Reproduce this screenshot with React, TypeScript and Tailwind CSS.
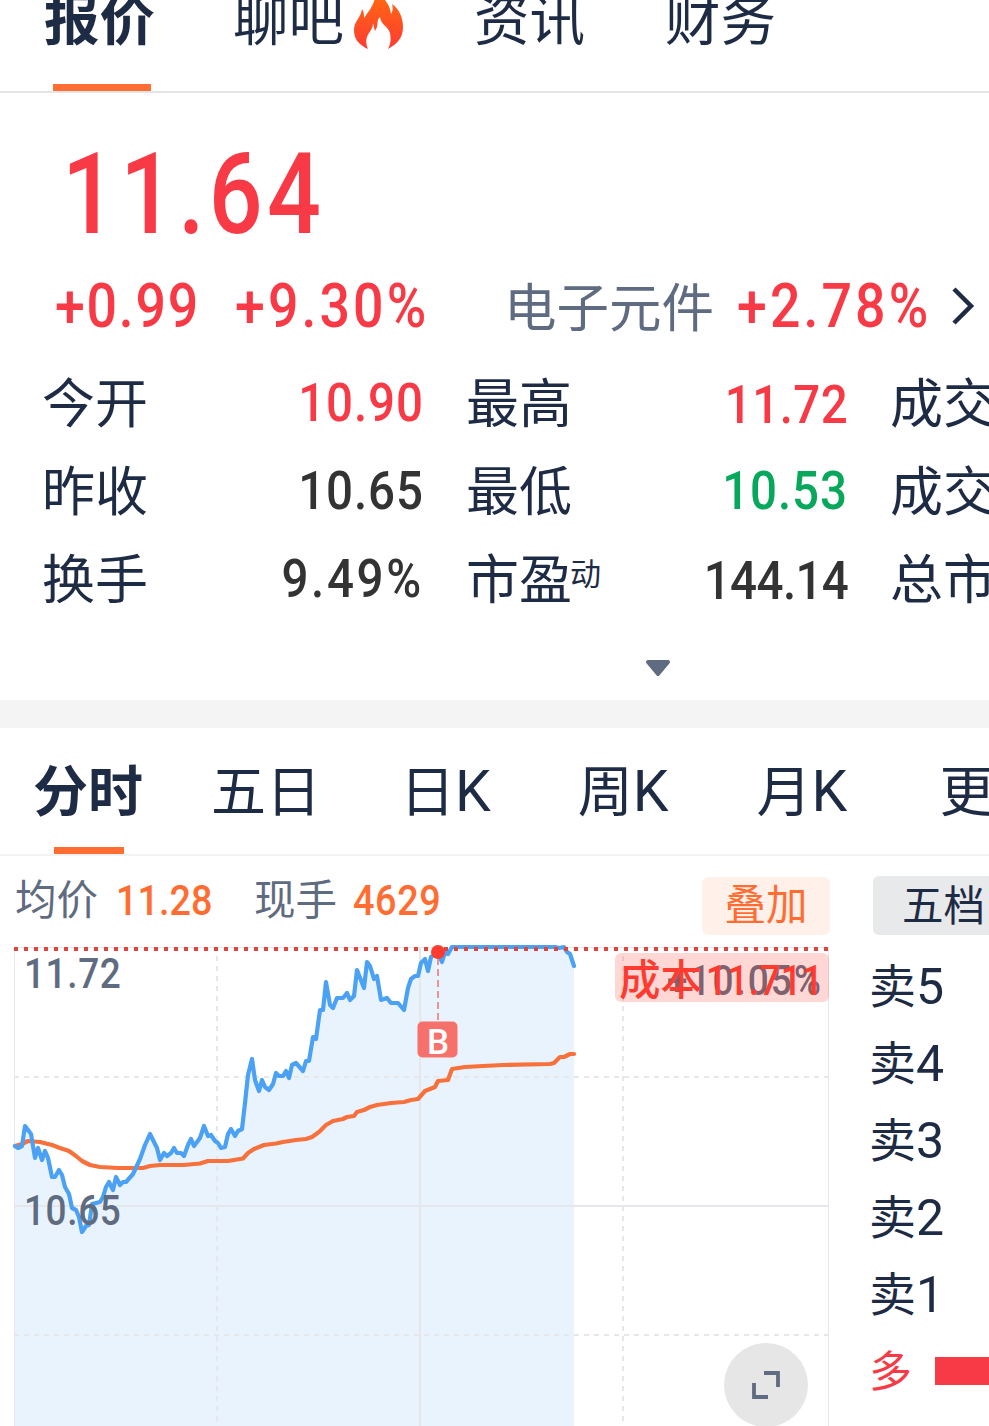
import React from "react";
import clsx from "clsx";

const CJK = "font-['Noto_Sans_CJK_SC',sans-serif]";
const NUM = "font-['Roboto','Noto_Sans_CJK_SC',sans-serif] font-medium";

// condensed figures, squeezed horizontally and tracked back out
const FIGURE = clsx(NUM, "origin-left scale-x-88 whitespace-nowrap");

// price line, chart coordinates start at the top-left of the plot panel
const pricePoints =
  "15,206 18,208 22,206 25,186 31,194 35,218 38,208 42,220 45,211 48,218 52,237 55,237 59,230 62,235 65,247 69,254 72,268 76,270 79,277 82,292 86,286 89,285 92,264 100,262 103,257 106,247 109,242 113,250 116,237 120,245 123,242 126,242 133,234 140,219 145,205 150,194 157,208 160,220 164,213 167,216 171,213 174,208 177,213 181,213 184,216 188,205 191,199 194,206 200,198 204,186 208,196 211,195 215,201 218,203 221,208 225,207 228,194 231,189 235,196 238,191 242,189 245,163 248,135 252,119 255,140 259,151 262,140 265,147 269,150 273,144 276,133 279,136 283,136 286,131 289,138 292,125 296,123 303,131 306,121 309,121 313,97 316,99 320,70 323,70 326,42 330,65 333,68 337,58 343,58 347,53 350,60 354,56 357,30 364,48 367,22 370,26 374,39 377,36 381,60 387,58 391,63 398,63 404,70 408,48 411,39 415,36 418,36 421,23 425,19 428,31 431,17 438,12 442,22 445,12 448,14 452,7 555,7 559,8 564,7 567,12 570,14 574,26";

const averagePoints =
  "15,206 22,204 28,201 40,202 52,205 60,208 69,211 76,216 82,221 90,225 100,227 118,228 143,228 150,226 160,225 184,225 200,223.5 208,221 228,221 243,218.5 248,213 254,209 264,205 276,203.5 283,202 296,200 306,199 312,197 319,192 326,185 333,181 343,179 347,177 354,176 357,172 364,170 370,167 377,165 391,163 404,162 411,160 418,159 425,151 435,147 438,141 448,140 452,129 465,127 483,126 503,125 550,124 554,123 560,117 564,117 570,114 574,114";

interface Stat {
  label: string;
  sup?: string;
  value?: string;
  tone?: string;
}

const stats: Stat[] = [
  { label: "今开", value: "10.90", tone: "text-[#f83a46] tracking-[1px]" },
  { label: "最高", value: "11.72", tone: "text-[#f83a46] tracking-[0.5px] pt-1" },
  { label: "成交量" },
  { label: "昨收", value: "10.65", tone: "text-[#333333] tracking-[1px]" },
  { label: "最低", value: "10.53", tone: "text-[#07a85c] tracking-[1px]" },
  { label: "成交额" },
  { label: "换手", value: "9.49%", tone: "text-[#333333] tracking-[3px]" },
  { label: "市盈", sup: "动", value: "144.14", tone: "text-[#333333] tracking-[-0.7px] pt-1" },
  { label: "总市值" },
];

const periods = [
  { text: "五日", margin: "ml-[68px]" },
  { text: "日", latin: "K", margin: "ml-[79px]" },
  { text: "周", latin: "K", margin: "ml-[87px]" },
  { text: "月", latin: "K", margin: "ml-[88px]" },
  { text: "更多", margin: "ml-[92px]" },
];

const sellLevels = ["5", "4", "3", "2", "1"];

const Flame = () => (
  <svg className="mt-[5px] ml-[9px] h-[56px] w-[52px] shrink-0" viewBox="353 -7 52 56">
    <defs>
      <linearGradient id="flame" x1="0" y1="0" x2="0" y2="1">
        <stop offset="0" stopColor="#ff6a10" />
        <stop offset="1" stopColor="#ff3a34" />
      </linearGradient>
    </defs>
    <path
      fill="url(#flame)"
      d="M368 49C359 45 354 39 354 30C354 21 361 18 362 9C364 12 364 14 364 18C369 11 374 5 376 -6C383 -4 390 4 391 14C393 11 393 8 392 4C399 9 403 17 403 27C403 38 397 44 388 49C391 43 391 38 390 33C388 26 381 25 380 17C376 20 379 26 375 31C374 29 374 26 373 23C373 28 371 30 369 33C365 39 366 44 368 49Z"
    />
  </svg>
);

const TopTabs = () => (
  <nav className={clsx(CJK, "h-[93px] overflow-hidden border-b-2 border-[#e5e5e5] text-[55.5px] leading-[56px] whitespace-nowrap text-[#1e2b45]")}>
    <div className="-mt-[12px] flex pl-[44px]">
      <div className="flex flex-col items-center">
        <span className="font-bold">报价</span>
        <span className="mt-[40px] ml-[5px] h-[7px] w-[98px] bg-[#ff6d33]" />
      </div>
      <span className="ml-[78px]">聊吧</span>
      <Flame />
      <span className="ml-[69px]">资讯</span>
      <span className="ml-[80px]">财务</span>
    </div>
  </nav>
);

const StatCell = ({ label, sup, value, tone }: Stat) => (
  <div className="flex h-[88px] items-center justify-between whitespace-nowrap">
    <span className="flex pb-[7px] text-[53px] leading-[60px] text-[#1e2b45]">
      {label}
      {sup && <sup className="top-0 -ml-[2px] text-[31px] leading-[52px]">{sup}</sup>}
    </span>
    {value && (
      <span className={clsx(NUM, "origin-right scale-x-88 text-[54px] leading-[60px]", tone)}>{value}</span>
    )}
  </div>
);

const Quote = () => (
  <section className={clsx(CJK, "h-[607px] overflow-hidden pt-[46px]")}>
    <div className={clsx(NUM, "ml-[62px] w-[400px] origin-left scale-x-84 text-[113px] leading-[112px] tracking-[5px] text-[#f83a46]")}>
      11.64
    </div>
    <div className="mt-[25px] flex h-[60px] items-center leading-[60px]">
      <span className={clsx(FIGURE, "ml-[55px] w-[180px] text-[61px] tracking-[2px] text-[#f83a46]")}>+0.99</span>
      <span className={clsx(FIGURE, "w-[269px] text-[61px] tracking-[3.5px] text-[#f83a46]")}>+9.30%</span>
      <span className="-mt-[4px] w-[231px] text-[52.5px] text-[#5f6b80]">电子元件</span>
      <span className={clsx(FIGURE, "ml-[2px] w-[213px] text-[61px] tracking-[3.5px] text-[#f83a46]")}>+2.78%</span>
      <svg className="h-[40px] w-[26px] shrink-0" viewBox="0 0 26 40" fill="none" stroke="#1e2b45" strokeWidth="4.5">
        <path d="M4 3L21 20L4 37" />
      </svg>
    </div>
    <div className="mt-[23px] grid grid-cols-[382px_382px_382px] gap-x-[42px] pl-[42px]">
      {stats.map((stat) => (
        <StatCell key={stat.label} {...stat} />
      ))}
    </div>
    <svg className="mt-[36px] ml-[645px] h-[18px] w-[26px]" viewBox="0 0 26 18">
      <path d="M3 3H23L13 15Z" fill="#5f6b80" stroke="#5f6b80" strokeWidth="4" strokeLinejoin="round" />
    </svg>
  </section>
);

const PeriodTabs = () => (
  <nav className={clsx(CJK, "flex h-[128px] overflow-hidden border-b-2 border-[#f3f3f3] pt-[27px] pl-[33px] text-[55px] leading-[64px] whitespace-nowrap text-[#1e2b45]")}>
    <div className="flex flex-col items-center">
      <span className="font-bold">分时</span>
      <span className="mt-[28px] ml-[2px] h-[7px] w-[70px] bg-[#ff6d33]" />
    </div>
    {periods.map(({ text, latin, margin }) => (
      <span key={text} className={margin}>
        {text}
        {latin && <span className="font-['Roboto'] text-[57px]">{latin}</span>}
      </span>
    ))}
  </nav>
);

const IntradayChart = () => (
  <div className="relative h-[486px] w-[830px]">
    <svg className="block h-[486px] w-[830px]" viewBox="0 0 830 486" fill="none">
      <polygon points={`14,486 ${pricePoints} 574,486`} fill="#e9f3fe" />
      <g stroke="#e6e7ea">
        <path d="M14.5 7V486M828.5 7V486M14 7.5H829" />
        <path d="M420 7V486M14 266H829" strokeWidth="2" />
        <path d="M217 16V486M623 16V486" strokeWidth="2" strokeDasharray="5 5" />
        <path d="M14 137H829M14 395H829" strokeWidth="2" strokeDasharray="5 5" />
      </g>
      <polyline points={averagePoints} stroke="#f8703a" strokeWidth="4.200" strokeLinejoin="round" strokeLinecap="round" />
      <polyline points={pricePoints} stroke="#4ba1f4" strokeWidth="4.200" strokeLinejoin="round" strokeLinecap="round" />
      <path d="M14 9H829" stroke="#e0443c" strokeWidth="4" strokeDasharray="4 6" />
      <path d="M438 18V80" stroke="#ea9393" strokeWidth="2" strokeDasharray="7 4" />
      <circle cx="438" cy="12" r="7" fill="#ff3b30" />
      <rect x="417.500" y="81.500" width="40" height="36" rx="5" fill="#f7716c" />
      <g className={NUM}>
        <text x="438" y="113.500" textAnchor="middle" fontSize="35" fill="#fff">B</text>
        <g fill="#5f6b80" fontSize="42">
          <text transform="translate(24 48) scale(0.88 1)" textLength="110">11.72</text>
          <text transform="translate(24 285) scale(0.88 1)" textLength="110">10.65</text>
          <text transform="translate(667 55) scale(0.88 1)" textLength="175">+10.05%</text>
        </g>
      </g>
      <rect x="615" y="13" width="214" height="49" rx="6" fill="#ff3b30" fillOpacity="0.2" />
      <text className={NUM} x="619" y="55" fontSize="41.500" fill="#ff3b30">成本</text>
      <text className={NUM} transform="translate(706 55) scale(0.88 1)" fontSize="42" fill="#ff3b30" textLength="133">11.711</text>
    </svg>
    <button className="absolute top-[403px] left-[724px] flex h-[84px] w-[84px] items-center justify-center rounded-full bg-[#e6e6e6]">
      <svg className="h-[30px] w-[30px]" viewBox="0 0 30 30" fill="none" stroke="#5f6b80" strokeWidth="3.800">
        <path d="M13 3H27V17M3 13V27H17" />
      </svg>
    </button>
  </div>
);

const OrderBook = () => (
  <aside className="w-[120px] shrink-0 overflow-hidden text-[#1e2b45]">
    <div className="mt-[20px] ml-[4px] h-[59px] w-[180px] rounded-md bg-[#e8e9eb] pl-[29px] text-[41.5px] leading-[55px] whitespace-nowrap">
      五档
    </div>
    <div className="mt-[11px]">
      {sellLevels.map((level) => (
        <div key={level} className="flex h-[77px] items-center text-[47px] leading-[60px]">
          <span className="pb-[4px]">卖</span>
          <span className="pt-[5px] font-['Roboto'] text-[50px]">{level}</span>
        </div>
      ))}
    </div>
    <div className="flex h-[77px] items-center text-[43px] text-[#f83a46]">
      <span className="pb-[2px]">多</span>
      <span className="mt-[2px] ml-[23px] h-[28px] w-[60px] shrink-0 bg-[#f83a46]" />
    </div>
  </aside>
);

const ChartPanel = () => (
  <section className={clsx(CJK, "flex h-[570px] overflow-hidden")}>
    <div className="w-[830px] shrink-0">
      <div className="flex h-[84px] items-center pl-[15px] text-[41.5px] leading-[58px] text-[#5f6b80]">
        <span className="pb-[3px]">均价</span>
        <span className={clsx(FIGURE, "mt-[4px] ml-[18px] w-[101px] text-[43px] text-[#ff6d33]")}>11.28</span>
        <span className="ml-[37px] pb-[3px]">现手</span>
        <span className={clsx(FIGURE, "mt-[4px] ml-[16px] text-[43px] tracking-[0.7px] text-[#ff6d33]")}>4629</span>
        <button className="mt-[15px] ml-auto h-[58px] w-[128px] rounded-md bg-[#fff0ea] pb-[8px] leading-[50px] text-[#ff6d33]">
          叠加
        </button>
      </div>
      <IntradayChart />
    </div>
    <div className="w-[39px] shrink-0" />
    <OrderBook />
  </section>
);

export default function App() {
  return (
    <main className="h-[1426px] w-[989px] overflow-hidden bg-white">
      <TopTabs />
      <Quote />
      <div className="h-[28px] bg-[#f4f4f4]" />
      <PeriodTabs />
      <ChartPanel />
    </main>
  );
}
